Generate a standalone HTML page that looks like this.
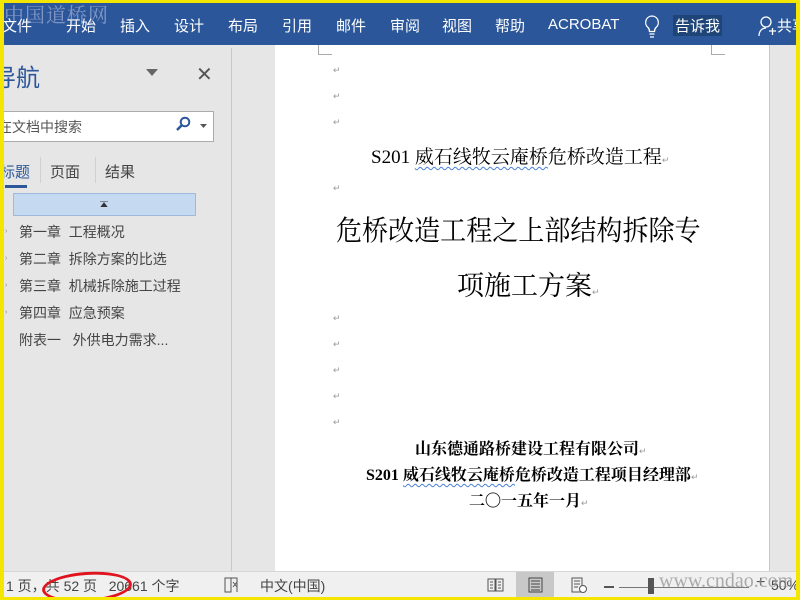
<!DOCTYPE html>
<html><head><meta charset="utf-8"><style>
body{margin:0;width:800px;height:600px;overflow:hidden;background:#f5e600;position:relative;font-family:"Liberation Sans","Noto Sans CJK SC",sans-serif}
.a{position:absolute;white-space:nowrap}
#win{position:absolute;left:4px;top:3px;width:792px;height:594px;background:#e6e6e6;overflow:hidden}
.rb{position:absolute;left:0;top:0;width:792px;height:42px;background:#2b579a}
.rb span{position:absolute;top:12px;color:#fff;font-size:15px;white-space:nowrap}
.doc{font-family:"Liberation Serif","Noto Serif CJK SC",serif;color:#000}
.pm{position:absolute;color:#999;font-size:9px}
.nav{font-size:14px;color:#444}
.wav{text-decoration:underline wavy #4a7fd6;text-underline-offset:3px;text-decoration-thickness:1px}
</style></head><body>
<div id="win">
<div class="rb">
<span style="left:-2px">文件</span><span style="left:62px">开始</span><span style="left:116px">插入</span><span style="left:170px">设计</span><span style="left:224px">布局</span><span style="left:278px">引用</span><span style="left:332px">邮件</span><span style="left:386px">审阅</span><span style="left:438px">视图</span><span style="left:491px">帮助</span><span style="left:544px;top:13px">ACROBAT</span>
<svg class="a" style="left:640px;top:12px" width="16" height="24" viewBox="0 0 16 24"><path d="M8 1a6.5 6.5 0 0 0-4 11.5c1 1 1.5 2 1.5 4h5c0-2 .5-3 1.5-4A6.5 6.5 0 0 0 8 1zM5.5 19h5M6 22h4" stroke="#fff" fill="none" stroke-width="1.3"/></svg>
<span style="left:669px;background:#1e4478;padding:0 2px">告诉我</span>
<svg class="a" style="left:754px;top:13px" width="18" height="22" viewBox="0 0 18 22"><circle cx="8" cy="6" r="5" stroke="#fff" fill="none" stroke-width="1.3"/><path d="M1 20c0-5 3-8 7-8M11 15h7M14.5 12v7" stroke="#fff" fill="none" stroke-width="1.3"/></svg>
<span style="left:773px">共享</span>
</div>
<div class="a" style="left:0;top:-4px;font-size:20px;color:rgba(200,200,230,.55);font-family:'Noto Serif CJK SC',serif;letter-spacing:1px">中国道桥网</div>
<div class="a" style="left:-12px;top:55px;font-size:24px;color:#2b579a">导航</div>
<svg class="a" style="left:142px;top:66px" width="12" height="8"><path d="M0 0h12L6 7z" fill="#666"/></svg>
<div class="a" style="left:192px;top:59px;font-size:20px;color:#555">✕</div>
<div class="a" style="left:-2px;top:108px;width:210px;height:29px;background:#fff;border:1px solid #ababab"></div>
<div class="a nav" style="left:-6px;top:114px;color:#555">在文档中搜索</div>
<svg class="a" style="left:172px;top:113px" width="16" height="16"><circle cx="9" cy="6" r="4.3" stroke="#2b579a" stroke-width="2" fill="none"/><path d="M6 9L1 14" stroke="#2b579a" stroke-width="2.5"/></svg>
<svg class="a" style="left:196px;top:121px" width="7" height="4"><path d="M0 0h7L3.5 4z" fill="#555"/></svg>
<div class="a nav" style="left:-4px;top:158px;color:#2b579a;font-size:15px">标题</div>
<div class="a nav" style="left:46px;top:158px;font-size:15px">页面</div>
<div class="a nav" style="left:101px;top:158px;font-size:15px">结果</div>
<div class="a" style="left:36px;top:154px;width:1px;height:26px;background:#d0d0d0"></div>
<div class="a" style="left:91px;top:154px;width:1px;height:26px;background:#d0d0d0"></div>
<div class="a" style="left:1px;top:182px;width:22px;height:3px;background:#2b579a"></div>
<div class="a" style="left:9px;top:190px;width:181px;height:21px;background:#c5d9f1;border:1px solid #9fb8dc"></div>
<svg class="a" style="left:96px;top:198px" width="8" height="6"><path d="M0 0h8M1 6h6L4 2z" stroke="#333" fill="#333" stroke-width="1"/></svg>
<div class="a nav" style="left:15px;top:219px">第一章&nbsp; 工程概况</div>
<div class="a nav" style="left:15px;top:246px">第二章&nbsp; 拆除方案的比选</div>
<div class="a nav" style="left:15px;top:273px">第三章&nbsp; 机械拆除施工过程</div>
<div class="a nav" style="left:15px;top:300px">第四章&nbsp; 应急预案</div>
<div class="a nav" style="left:15px;top:327px">附表一&nbsp;&nbsp; 外供电力需求...</div>
<div class="a" style="left:1px;top:225px;font-size:7px;color:#888">›</div>
<div class="a" style="left:1px;top:252px;font-size:7px;color:#888">›</div>
<div class="a" style="left:1px;top:279px;font-size:7px;color:#888">›</div>
<div class="a" style="left:1px;top:306px;font-size:7px;color:#888">›</div>
<div class="a" style="left:227px;top:45px;width:1px;height:523px;background:#c8c8c8"></div>
<div class="a" style="left:271px;top:42px;width:494px;height:526px;background:#fff"></div>
<div class="a" style="left:765px;top:42px;width:1px;height:526px;background:#c6c6c6"></div>
<div class="a" style="left:314px;top:42px;width:1px;height:9px;background:#aaa"></div>
<div class="a" style="left:314px;top:51px;width:14px;height:1px;background:#aaa"></div>
<div class="a" style="left:707px;top:42px;width:1px;height:9px;background:#aaa"></div>
<div class="a" style="left:707px;top:51px;width:14px;height:1px;background:#aaa"></div>
<div class="pm" style="left:329px;top:62px">↵</div>
<div class="pm" style="left:329px;top:88px">↵</div>
<div class="pm" style="left:329px;top:114px">↵</div>
<div class="pm" style="left:329px;top:180px">↵</div>
<div class="pm" style="left:329px;top:310px">↵</div>
<div class="pm" style="left:329px;top:336px">↵</div>
<div class="pm" style="left:329px;top:362px">↵</div>
<div class="pm" style="left:329px;top:388px">↵</div>
<div class="pm" style="left:329px;top:414px">↵</div>
<div class="a doc" style="left:367px;top:139px;font-size:19px">S201 <span class="wav">威石线牧云庵桥</span>危桥改造工程<span style="font-size:9px;color:#999">↵</span></div>
<div class="a doc" style="left:332px;top:206px;font-size:28px;transform:scaleX(.93);transform-origin:0 0">危桥改造工程之上部结构拆除专</div>
<div class="a doc" style="left:453px;top:261px;font-size:27px">项施工方案<span style="font-size:9px;color:#999">↵</span></div>
<div class="a doc" style="left:411px;top:433px;font-size:16px;font-weight:bold">山东德通路桥建设工程有限公司<span style="font-size:9px;color:#999;font-weight:normal">↵</span></div>
<div class="a doc" style="left:362px;top:459px;font-size:16px;font-weight:bold">S201 <span class="wav">威石线牧云庵桥</span>危桥改造工程项目经理部<span style="font-size:9px;color:#999;font-weight:normal">↵</span></div>
<div class="a doc" style="left:465px;top:485px;font-size:16px;font-weight:bold">二〇一五年一月<span style="font-size:9px;color:#999;font-weight:normal">↵</span></div>
<div class="a" style="left:0;top:568px;width:792px;height:26px;background:#f0f0f0;border-top:1px solid #d6d6d6"></div>
<div class="a" style="left:2px;top:573px;font-size:14px;color:#444">1 页，共 52 页&nbsp;&nbsp; 20661 个字</div>
<svg class="a" style="left:219px;top:574px" width="18" height="16"><path d="M2 1h6v14H2zM8 1h6v14" stroke="#555" fill="none"/><path d="M10 5l4 5M14 5l-4 5" stroke="#555"/></svg>
<div class="a" style="left:256px;top:573px;font-size:14px;color:#444">中文(中国)</div>
<svg class="a" style="left:483px;top:574px" width="18" height="16"><path d="M1 2h7v12H1zM9 2h7v12H9zM3 5h3M3 8h3M3 11h3M11 5h3M11 8h3M11 11h3" stroke="#555" fill="none"/></svg>
<div class="a" style="left:512px;top:569px;width:38px;height:25px;background:#c8c8c8"></div>
<svg class="a" style="left:524px;top:574px" width="15" height="16"><path d="M1 1h13v14H1zM3 4h9M3 7h9M3 10h9M3 13h9" stroke="#444" fill="none"/></svg>
<svg class="a" style="left:567px;top:574px" width="16" height="16"><path d="M1 1h10v14H1zM3 4h6M3 7h6M3 10h4" stroke="#555" fill="none"/><circle cx="12" cy="12" r="3.5" fill="#fff" stroke="#555"/></svg>
<div class="a" style="left:600px;top:583px;width:10px;height:2px;background:#555"></div>
<div class="a" style="left:615px;top:584px;width:130px;height:1px;background:#777"></div>
<div class="a" style="left:644px;top:575px;width:6px;height:16px;background:#555"></div>
<div class="a" style="left:752px;top:571px;font-size:16px;color:#555">+</div>
<div class="a" style="left:767px;top:574px;font-size:14px;color:#444">50%</div>
<div class="a" style="left:655px;top:567px;font-size:20px;color:rgba(140,140,140,.7);font-family:'Liberation Serif',serif">www.cndao.com</div>
<div class="a" style="left:38px;top:569px;width:84px;height:24px;border:3px solid #e0141e;border-radius:50%;transform:rotate(-4deg)"></div>
</div>
</body></html>
